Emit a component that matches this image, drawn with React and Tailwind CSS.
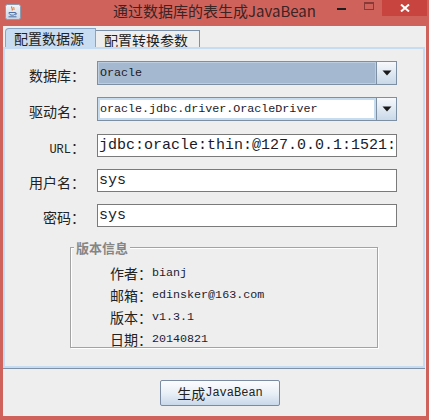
import React from "react";

const CJK = "font-['Noto_Sans_CJK_SC','Noto_Sans_CJK_JP',sans-serif]";
const MONO = "font-['Liberation_Mono','DejaVu_Sans_Mono',monospace]";

function JavaIcon() {
  return (
    <svg width="16" height="16" viewBox="0 0 16 16">
      <defs>
        <linearGradient id="jg" x1="0" y1="0" x2="0" y2="1">
          <stop offset="0" stopColor="#f4f6fa" />
          <stop offset="1" stopColor="#c9d3e2" />
        </linearGradient>
      </defs>
      <rect x="0.5" y="0.5" width="15" height="15" rx="2" fill="url(#jg)" stroke="#8c9ab0" />
      <path d="M7 2.5 C5.5 4 8.5 4.5 7 6.5" stroke="#e0772b" strokeWidth="1.2" fill="none" />
      <path d="M9 3 C8 4 9.8 4.6 8.8 6" stroke="#e0772b" strokeWidth="1" fill="none" />
      <path d="M4 8.5 H10.5 C10.5 10.5 9 11.2 7.2 11.2 C5.5 11.2 4 10.5 4 8.5 Z" fill="none" stroke="#4a6fa5" strokeWidth="1" />
      <path d="M10.5 9 C12.2 9 12.2 10.6 10 10.8" fill="none" stroke="#4a6fa5" strokeWidth="0.9" />
      <path d="M3.5 12.8 H11.5" stroke="#4a6fa5" strokeWidth="1" />
    </svg>
  );
}

function Arrow() {
  return (
    <div className="flex w-[20px] items-center justify-center border-l border-[#7d8fa3] bg-gradient-to-b from-[#f7f9fc] to-[#c9d8e8]">
      <svg width="10" height="6" viewBox="0 0 10 6">
        <path d="M0.5 0.5 H9.5 L5 5.5 Z" fill="#1a1a1a" />
      </svg>
    </div>
  );
}

function Label({ children }) {
  return (
    <div className={`h-[23px] w-[80px] shrink-0 pt-[4px] text-right text-[14px] leading-[19px] text-[#222] ${CJK}`}>
      {children}
    </div>
  );
}

function Row({ label, children, className }) {
  return (
    <div className={`flex items-center gap-[12px] ${className}`}>
      <Label>{label}</Label>
      {children}
    </div>
  );
}

function InfoRow({ label, value, h = "h-[22px]" }) {
  return (
    <div className={`flex items-start ${h}`}>
      <span className={`text-[14px] leading-[20px] text-[#222] ${CJK}`}>{label}</span>
      <span className={`text-[11.7px] leading-[20px] text-[#1c1c30] ${MONO}`}>{value}</span>
    </div>
  );
}

export default function App() {
  return (
    <div className="flex h-[420px] w-[429px] flex-col bg-[#d0625c]">
      {/* Title bar */}
      <div className="grid h-[26px] grid-cols-[1fr_auto_1fr]">
        <div className="flex items-start pl-[5px] pt-[4px]">
          <JavaIcon />
        </div>
        <div className={`pt-[1px] text-[15px] leading-[20px] text-[#3a2424] ${CJK}`}>
          通过数据库的表生成JavaBean
        </div>
        <div className="flex items-start justify-end pr-[2px]">
          <div className="mt-[8px] h-[2px] w-[9px] bg-[#1e1e1e]" />
          <div className="ml-[18px] mt-[2px] h-[8px] w-[10px] border border-t-2 border-[#8a3a36]" />
          <div className="ml-[8px] flex h-[16px] w-[45px] items-center justify-center bg-[#c7453e]">
            <svg width="10" height="8" viewBox="0 0 10 8">
              <path d="M1 0.5 L9 7.5 M9 0.5 L1 7.5" stroke="#ffffff" strokeWidth="2" />
            </svg>
          </div>
        </div>
      </div>

      {/* Client area */}
      <div className="mx-[3px] mb-[4px] flex flex-1 flex-col bg-[#eeeeee]">
        {/* Tabs */}
        <div className="flex h-[21px] items-end pl-[2px]">
          <div className={`relative z-10 flex h-[19px] w-[91px] items-center rounded-tl-[4px] border-l border-t border-r border-[#8aa4c3] bg-[#c8ddf2] pl-[8px] text-[14px] leading-[18px] text-[#222] ${CJK}`}>
            配置数据源
          </div>
          <div className={`flex h-[17px] w-[104px] items-center border-t border-r border-[#7d91aa] bg-[#eeeeee] pl-[8px] pt-[1px] text-[14px] leading-[16px] text-[#222] ${CJK}`}>
            配置转换参数
          </div>
        </div>

        {/* Panel */}
        <div className="mr-[1px] flex h-[321px] flex-col border-2 border-[#c6dcf2] pt-[12px] shadow-[0_1px_0_#7e91a7]">
          <Row label="数据库：">
            <div className="flex h-[24px] w-[300px] border border-[#7d8fa3] bg-white">
              <div className="flex flex-1 items-center border border-[#bccde0] bg-[#a4b9cf] pl-[1px]">
                <span className={`text-[11.7px] leading-[16px] text-[#1a1a2a] ${MONO}`}>Oracle</span>
              </div>
              <Arrow />
            </div>
          </Row>
          <Row label="驱动名：" className="mt-[12px]">
            <div className="flex h-[24px] w-[300px] border border-[#7d8fa3] bg-white">
              <div className="flex flex-1 items-center border-2 border-[#c8dcf0] bg-white">
                <span className={`text-[11.7px] leading-[16px] text-[#1a1a2a] ${MONO}`}>oracle.jdbc.driver.OracleDriver</span>
              </div>
              <Arrow />
            </div>
          </Row>
          <Row
            label={
              <>
                <span className={`text-[12px] ${MONO}`}>URL</span>：
              </>
            }
            className="mt-[13px]"
          >
            <div className="flex h-[23px] w-[300px] items-center overflow-hidden whitespace-nowrap border border-[#7a7a7a] bg-white pl-[1px]">
              <span className={`text-[15px] leading-[18px] text-[#1a1a2a] ${MONO}`}>jdbc:oracle:thin:@127.0.0.1:1521:orcl</span>
            </div>
          </Row>
          <Row label="用户名：" className="mt-[12px]">
            <div className="flex h-[23px] w-[300px] items-center border border-[#7a7a7a] bg-white pl-[1px]">
              <span className={`text-[15px] leading-[18px] text-[#1a1a2a] ${MONO}`}>sys</span>
            </div>
          </Row>
          <Row label="密码：" className="mt-[12px]">
            <div className="flex h-[23px] w-[300px] items-center border border-[#7a7a7a] bg-white pl-[1px]">
              <span className={`text-[15px] leading-[18px] text-[#1a1a2a] ${MONO}`}>sys</span>
            </div>
          </Row>

          {/* Group box */}
          <div className="relative ml-[65px] mt-[20px] h-[101px] w-[308px] border border-[#a3a3a3] pl-[39px] pt-[15px] shadow-[1px_1px_0_#ffffff,inset_1px_1px_0_#ffffff]">
            <div className={`absolute left-[3px] top-[-9px] bg-[#eeeeee] px-[2px] text-[13px] font-bold leading-[18px] text-[#858585] ${CJK}`}>
              版本信息
            </div>
            <InfoRow label="作者：" value="bianj" />
            <InfoRow label="邮箱：" value="edinsker@163.com" />
            <InfoRow label="版本：" value="v1.3.1" />
            <InfoRow label="日期：" value="20140821" h="h-[18px]" />
          </div>
        </div>

        {/* Bottom */}
        <div className="flex flex-1 items-start pl-[157px] pt-[12px]">
          <button className="flex h-[26px] w-[120px] items-center justify-center rounded-[2px] border border-[#7a8ba3] bg-gradient-to-b from-[#fbfcfe] via-[#eaf0f7] to-[#c9d8ea] text-[#222]">
            <span className={`text-[14px] leading-[18px] ${CJK}`}>生成</span>
            <span className={`text-[12px] leading-[18px] ${MONO}`}>JavaBean</span>
          </button>
        </div>
      </div>
    </div>
  );
}
